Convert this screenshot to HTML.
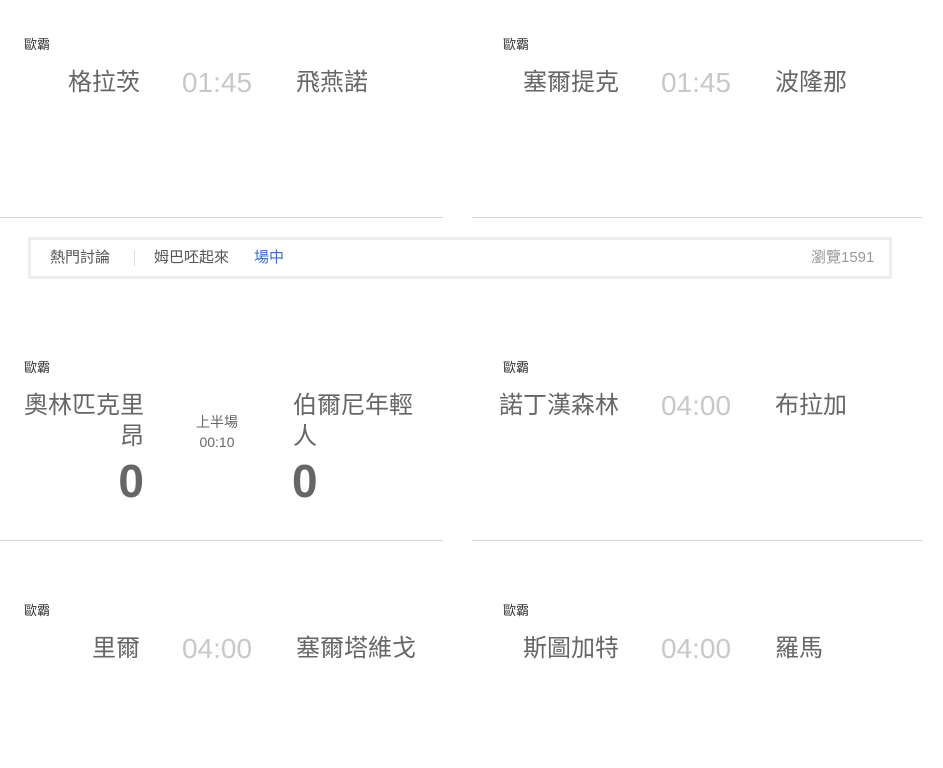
<!DOCTYPE html><html><head><meta charset="utf-8"><style>
body{margin:0;width:943px;height:768px;background:#fff;position:relative;overflow:hidden;font-family:"Liberation Sans","Noto Sans CJK TC",sans-serif;color:#666}
div{position:absolute;white-space:nowrap}
.lg{font-size:13px;color:#333;line-height:16px}
.h{font-size:24px;line-height:30px;text-align:right;width:200px}
.a{font-size:24px;line-height:30px}
.t{font-size:28px;line-height:30px;color:#c8c8c8;text-align:center;width:120px}
.ln{height:1px;background:#d6d6d6;top:217px}
.b{font-size:15px;line-height:18px;color:#555;top:249px}
</style></head><body>
<div class="lg" style="left:24px;top:37px">歐霸</div>
<div class="h" style="left:-60px;top:68px">格拉茨</div>
<div class="t" style="left:157px;top:68px">01:45</div>
<div class="a" style="left:296px;top:68px">飛燕諾</div>
<div class="lg" style="left:503px;top:37px">歐霸</div>
<div class="h" style="left:419px;top:68px">塞爾提克</div>
<div class="t" style="left:636px;top:68px">01:45</div>
<div class="a" style="left:775px;top:68px">波隆那</div>
<div class="ln" style="left:0;width:443px"></div>
<div class="ln" style="left:472px;width:450px"></div>

<div style="left:28px;top:237px;width:858px;height:36px;border:3px solid #eee;background:#fff"></div>
<div class="b" style="left:50px">熱門討論</div>
<div style="left:134px;top:250px;width:1px;height:16px;background:#ddd"></div>
<div class="b" style="left:154px">姆巴呸起來</div>
<div class="b" style="left:254px;color:#3a6fc0">場中</div>
<div class="b" style="left:811px;color:#999">瀏覽1591</div>

<div class="lg" style="left:24px;top:360px">歐霸</div>
<div style="left:20px;top:390px;width:124px;font-size:24px;line-height:31px;text-align:right;white-space:normal">奧林匹克里昂</div>
<div style="left:100px;top:456px;width:44px;text-align:right;font-size:46px;font-weight:bold;line-height:50px;color:#666">0</div>
<div style="left:177px;top:412px;width:80px;text-align:center;font-size:14px;line-height:20px;color:#666">上半場<br>00:10</div>
<div style="left:293px;top:390px;width:124px;font-size:24px;line-height:31px;white-space:normal">伯爾尼年輕人</div>
<div style="left:292px;top:456px;font-size:46px;font-weight:bold;line-height:50px;color:#666">0</div>
<div class="lg" style="left:503px;top:360px">歐霸</div>
<div class="h" style="left:419px;top:391px">諾丁漢森林</div>
<div class="t" style="left:636px;top:391px">04:00</div>
<div class="a" style="left:775px;top:391px">布拉加</div>
<div class="ln" style="left:0;width:443px;top:540px"></div>
<div class="ln" style="left:472px;width:450px;top:540px"></div>

<div class="lg" style="left:24px;top:603px">歐霸</div>
<div class="h" style="left:-60px;top:634px">里爾</div>
<div class="t" style="left:157px;top:634px">04:00</div>
<div class="a" style="left:296px;top:634px">塞爾塔維戈</div>
<div class="lg" style="left:503px;top:603px">歐霸</div>
<div class="h" style="left:419px;top:634px">斯圖加特</div>
<div class="t" style="left:636px;top:634px">04:00</div>
<div class="a" style="left:775px;top:634px">羅馬</div>
</body></html>
